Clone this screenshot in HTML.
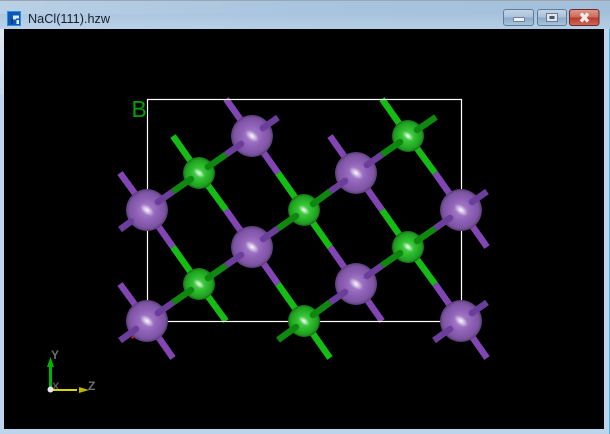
<!DOCTYPE html>
<html>
<head>
<meta charset="utf-8">
<style>
html,body{margin:0;padding:0;width:610px;height:434px;overflow:hidden;background:#bcd5ec}
svg{display:block;position:absolute;left:0;top:0}
</style>
</head>
<body>
<svg width="610" height="434" viewBox="0 0 610 434" xmlns="http://www.w3.org/2000/svg">
<defs>
<linearGradient id="tb" x1="0" y1="0" x2="0" y2="1">
<stop offset="0" stop-color="#a6c2dc"/><stop offset=".45" stop-color="#b4cde4"/><stop offset="1" stop-color="#bdd5ec"/>
</linearGradient>
<linearGradient id="tbx" x1="0" y1="0" x2="1" y2="0">
<stop offset="0" stop-color="#b9d0e6"/><stop offset=".5" stop-color="#a9c4de"/><stop offset="1" stop-color="#a3bfda"/>
</linearGradient>
<linearGradient id="lf" x1="0" y1="0" x2="0" y2="1">
<stop offset="0" stop-color="#dfe9f3"/><stop offset="1" stop-color="#c4d9ee"/>
</linearGradient>
<linearGradient id="btn" x1="0" y1="0" x2="0" y2="1">
<stop offset="0" stop-color="#c3d5e6"/><stop offset=".48" stop-color="#a9c1d9"/><stop offset=".52" stop-color="#8cabc9"/><stop offset="1" stop-color="#a9c6df"/>
</linearGradient>
<linearGradient id="cls" x1="0" y1="0" x2="0" y2="1">
<stop offset="0" stop-color="#dd9a8c"/><stop offset=".48" stop-color="#cf6a5a"/><stop offset=".52" stop-color="#b93a2b"/><stop offset="1" stop-color="#cf6a58"/>
</linearGradient>
<radialGradient id="p">
<stop offset="0" stop-color="#ae8ace"/><stop offset=".5" stop-color="#9062b8"/><stop offset=".85" stop-color="#7d54a4"/><stop offset="1" stop-color="#5a3c75"/>
</radialGradient>
<radialGradient id="g">
<stop offset="0" stop-color="#58d558"/><stop offset=".5" stop-color="#2cbb2c"/><stop offset=".85" stop-color="#1f9f1f"/><stop offset="1" stop-color="#156a15"/>
</radialGradient>
<radialGradient id="hl">
<stop offset="0" stop-color="#fff" stop-opacity=".95"/><stop offset=".4" stop-color="#fff" stop-opacity=".55"/><stop offset="1" stop-color="#fff" stop-opacity="0"/>
</radialGradient>
<ellipse id="hp" cx="0" cy="0" rx="8" ry="4.500" fill="url(#hl)" transform="rotate(38)"/>
<ellipse id="hg" cx="0" cy="0" rx="6.500" ry="3.500" fill="url(#hl)" transform="rotate(38)"/>
</defs>

<rect width="610" height="434" fill="#bcd5ec"/>
<rect width="610" height="29" fill="url(#tbx)"/>
<rect y="14" width="610" height="15" fill="url(#tb)" opacity=".6"/>
<rect y="0" width="610" height="1" fill="#9aa6b2"/>
<rect x="0" y="29" width="4" height="66" fill="url(#lf)"/>
<rect x="609" y="29" width="1" height="405" fill="#4fb4dc"/>

<rect x="7.500" y="11.500" width="13" height="14" fill="#0c58b4" stroke="#2a90e6"/>
<path d="M13 15.500h6v3h-3v1h-3z" fill="#d8e8f6"/>
<path d="M16.500 20h2.500v4h-2.500z" fill="#e8f2fb"/>
<path d="M11 19h2v5h-2z" fill="#083e80"/>
<text x="28" y="23" font-family="Liberation Sans, sans-serif" font-size="13" fill="#14202e" textLength="82" lengthAdjust="spacingAndGlyphs">NaCl(111).hzw</text>

<rect x="503.5" y="9.5" width="30" height="16" rx="2.5" fill="url(#btn)" stroke="#5f7c99"/>
<rect x="513.500" y="17.500" width="11" height="4" rx="1" fill="#eef2f6" stroke="#56657a" stroke-width=".7"/>
<rect x="537.5" y="9.5" width="29" height="16" rx="2.5" fill="url(#btn)" stroke="#5f7c99"/>
<rect x="546.500" y="13.500" width="11" height="8" fill="#dfe5ec" stroke="#56657a" stroke-width=".8"/>
<rect x="549.5" y="16" width="5" height="3" fill="#47566c"/>
<rect x="569.5" y="9.5" width="29.5" height="16" rx="2.5" fill="url(#cls)" stroke="#6e2a28"/>
<path d="M581 13.500l7 8M588 13.500l-7 8" stroke="#f1ecea" stroke-width="3.400" fill="none"/>

<rect x="4" y="29" width="600" height="400" fill="#000"/>

<text x="131.5" y="117" font-family="Liberation Sans, sans-serif" font-size="23" fill="#00a000">B</text>

<!-- back bonds NW-SE -->
<g stroke-width="6.500" fill="none" stroke-linecap="butt">
<g stroke="#8246b4">
<path d="M120 173L147 210L173 247"/>
<path d="M120 284L147 321L173 358"/>
<path d="M226 99L252 136L278 173"/>
<path d="M252 247L278 284"/>
<path d="M226 210L252 247"/>
<path d="M330 136L356 173L382 210"/>
<path d="M330 247L356 284L382 321"/>
<path d="M435 173L461 210L487 247"/>
<path d="M435 284L461 321L487 358"/>
</g>
<g stroke="#14bc14">
<path d="M173 136L199 173L226 210"/>
<path d="M173 247L199 284L226 321"/>
<path d="M278 173L304 210L330 247"/>
<path d="M278 284L304 321L330 358"/>
<path d="M382 99L408 136L435 173"/>
<path d="M382 210L408 247L435 284"/>
</g>
</g>

<!-- cell box -->
<rect x="147.5" y="99.5" width="314" height="222" fill="none" stroke="#fff" stroke-width="1.2"/>
<circle cx="132.500" cy="337.500" r="1.200" fill="#e02020"/>

<!-- spheres -->
<g fill="url(#p)">
<circle cx="147" cy="210" r="21"/>
<circle cx="252" cy="136" r="21"/>
<circle cx="356" cy="173" r="21"/>
<circle cx="461" cy="210" r="21"/>
<circle cx="252" cy="247" r="21"/>
<circle cx="356" cy="284" r="21"/>
<circle cx="147" cy="321" r="21"/>
<circle cx="461" cy="321" r="21"/>
</g>
<g fill="url(#g)">
<circle cx="199" cy="173" r="16"/>
<circle cx="304" cy="210" r="16"/>
<circle cx="408" cy="136" r="16"/>
<circle cx="408" cy="247" r="16"/>
<circle cx="199" cy="284" r="16"/>
<circle cx="304" cy="321" r="16"/>
</g>
<use href="#hp" x="147" y="210"/><use href="#hp" x="252" y="136"/><use href="#hp" x="356" y="173"/><use href="#hp" x="461" y="210"/>
<use href="#hp" x="252" y="247"/><use href="#hp" x="356" y="284"/><use href="#hp" x="147" y="321"/><use href="#hp" x="461" y="321"/>
<use href="#hg" x="199" y="173"/><use href="#hg" x="304" y="210"/><use href="#hg" x="408" y="136"/><use href="#hg" x="408" y="247"/>
<use href="#hg" x="199" y="284"/><use href="#hg" x="304" y="321"/>

<!-- front bonds NE-SW -->
<g stroke-width="6.500" fill="none" stroke-linecap="butt">
<g stroke="#6c3e9c">
<path d="M120 229.500L131 221.500"/>
<path d="M158 202L173 191.500"/>
<path d="M120 340.500L136 329"/>
<path d="M158 313L173 302.500"/>
<path d="M226 154.500L241 144"/>
<path d="M263 128L278 117.500"/>
<path d="M226 265.500L241 255"/>
<path d="M263 239L278 228.500"/>
<path d="M330 191.500L345 181"/>
<path d="M367 165L382 154.500"/>
<path d="M330 302.500L345 292"/>
<path d="M367 276L382 265.500"/>
<path d="M435 228.500L450 218"/>
<path d="M472 202L487 191.500"/>
<path d="M434 340.500L450 329"/>
<path d="M472 313L487 302.500"/>
<path stroke-linecap="round" d="M131 221.500h0M158 202h0M136 329h0M158 313h0M241 144h0M263 128h0M241 255h0M263 239h0M345 181h0M367 165h0M345 292h0M367 276h0M450 218h0M472 202h0M450 329h0M472 313h0"/>
</g>
<g stroke="#0e880e">
<path d="M173 191.500L191 179"/>
<path d="M208 167L226 154.500"/>
<path d="M173 302.500L191 290"/>
<path d="M208 278L226 265.500"/>
<path d="M278 228.500L296 216"/>
<path d="M313 204L330 191.500"/>
<path d="M278 340L296 327"/>
<path d="M313 315L330 302.500"/>
<path d="M382 154.500L400 142"/>
<path d="M417 130L436 117"/>
<path d="M382 265.500L400 253"/>
<path d="M417 241L435 228.500"/>
<path stroke-linecap="round" d="M191 179h0M208 167h0M191 290h0M208 278h0M296 216h0M313 204h0M296 327h0M313 315h0M400 142h0M417 130h0M400 253h0M417 241h0"/>
</g>
</g>

<!-- axes -->
<text x="51" y="359" font-family="Liberation Sans, sans-serif" font-size="12" font-weight="bold" fill="#6e6e6e">Y</text>
<text x="52" y="390" font-family="Liberation Sans, sans-serif" font-size="11" font-weight="bold" fill="#5a5a5a">X</text>
<text x="88" y="390" font-family="Liberation Sans, sans-serif" font-size="12" font-weight="bold" fill="#6e6e6e">Z</text>
<rect x="49" y="367" width="3" height="22" fill="#00b400"/>
<path d="M50.500 357L54 367H47Z" fill="#00b400"/>
<rect x="50" y="389" width="27" height="2" fill="#d8d800"/>
<path d="M79 387L89 390L79 393Z" fill="#b8b800"/>
<circle cx="50.500" cy="389.500" r="3" fill="#e8e8e8"/>
</svg>
</body>
</html>
